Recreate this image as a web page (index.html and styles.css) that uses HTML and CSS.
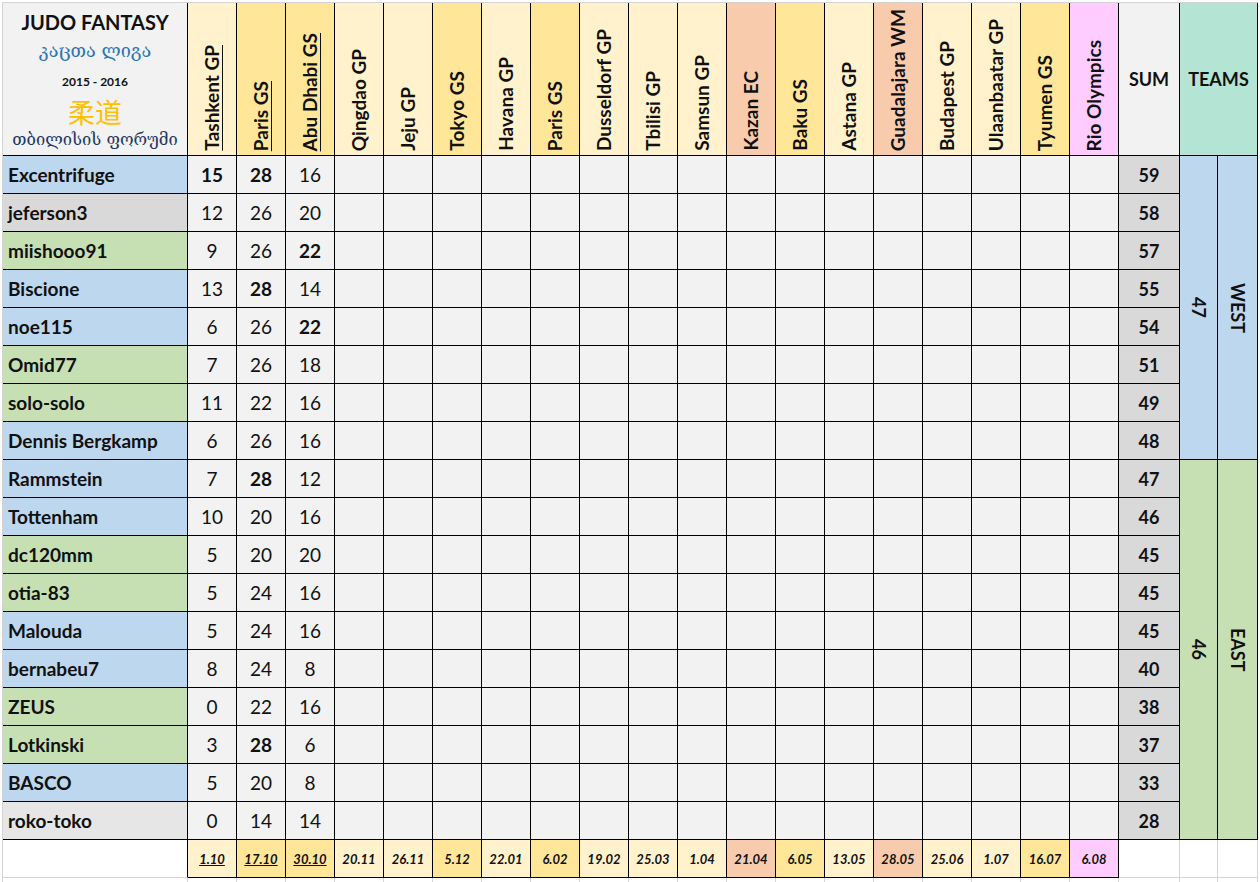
FILE: index.html
```html
<!DOCTYPE html>
<html lang="ka">
<head>
<meta charset="utf-8">
<title>Judo Fantasy 2015 - 2016</title>
<link rel="stylesheet" href="styles.css">
</head>
<body>
<div class="sheet">
  <!-- header row -->
  <div class="c title">
    <div class="t1">JUDO FANTASY</div>
    <div class="t2">კაცთა ლიგა</div>
    <div class="t3">2015 - 2016</div>
    <div class="t4">柔道</div>
    <div class="t5">თბილისის ფორუმი</div>
  </div>
  <div class="c ev lt"><span class="u">Tashkent GP</span></div>
  <div class="c ev st"><span class="u">Paris GS</span></div>
  <div class="c ev st"><span class="u">Abu Dhabi GS</span></div>
  <div class="c ev lt"><span>Qingdao GP</span></div>
  <div class="c ev lt"><span>Jeju GP</span></div>
  <div class="c ev st"><span>Tokyo GS</span></div>
  <div class="c ev lt"><span>Havana GP</span></div>
  <div class="c ev st"><span>Paris GS</span></div>
  <div class="c ev lt"><span>Dusseldorf GP</span></div>
  <div class="c ev lt"><span>Tbilisi GP</span></div>
  <div class="c ev lt"><span>Samsun GP</span></div>
  <div class="c ev or"><span>Kazan EC</span></div>
  <div class="c ev st"><span>Baku GS</span></div>
  <div class="c ev lt"><span>Astana GP</span></div>
  <div class="c ev or"><span>Guadalajara WM</span></div>
  <div class="c ev lt"><span>Budapest GP</span></div>
  <div class="c ev lt"><span>Ulaanbaatar GP</span></div>
  <div class="c ev st"><span>Tyumen GS</span></div>
  <div class="c ev pk"><span>Rio Olympics</span></div>
  <div class="c sumh">SUM</div>
  <div class="c teamsh">TEAMS</div>

  <!-- team blocks -->
  <div class="c tb west-n"><span>47</span></div>
  <div class="c tb west-l"><span>WEST</span></div>
  <div class="c tb east-n"><span>46</span></div>
  <div class="c tb east-l"><span>EAST</span></div>

  <!-- rows -->
  <div class="c n blue">Excentrifuge</div>
  <div class="c s b">15</div><div class="c s b">28</div><div class="c s">16</div>
  <div class="c s"></div><div class="c s"></div><div class="c s"></div><div class="c s"></div><div class="c s"></div><div class="c s"></div><div class="c s"></div><div class="c s"></div>
  <div class="c s"></div><div class="c s"></div><div class="c s"></div><div class="c s"></div><div class="c s"></div><div class="c s"></div><div class="c s"></div><div class="c s"></div>
  <div class="c sum">59</div>

  <div class="c n gray">jeferson3</div>
  <div class="c s">12</div><div class="c s">26</div><div class="c s">20</div>
  <div class="c s"></div><div class="c s"></div><div class="c s"></div><div class="c s"></div><div class="c s"></div><div class="c s"></div><div class="c s"></div><div class="c s"></div>
  <div class="c s"></div><div class="c s"></div><div class="c s"></div><div class="c s"></div><div class="c s"></div><div class="c s"></div><div class="c s"></div><div class="c s"></div>
  <div class="c sum">58</div>

  <div class="c n green">miishooo91</div>
  <div class="c s">9</div><div class="c s">26</div><div class="c s b">22</div>
  <div class="c s"></div><div class="c s"></div><div class="c s"></div><div class="c s"></div><div class="c s"></div><div class="c s"></div><div class="c s"></div><div class="c s"></div>
  <div class="c s"></div><div class="c s"></div><div class="c s"></div><div class="c s"></div><div class="c s"></div><div class="c s"></div><div class="c s"></div><div class="c s"></div>
  <div class="c sum">57</div>

  <div class="c n blue">Biscione</div>
  <div class="c s">13</div><div class="c s b">28</div><div class="c s">14</div>
  <div class="c s"></div><div class="c s"></div><div class="c s"></div><div class="c s"></div><div class="c s"></div><div class="c s"></div><div class="c s"></div><div class="c s"></div>
  <div class="c s"></div><div class="c s"></div><div class="c s"></div><div class="c s"></div><div class="c s"></div><div class="c s"></div><div class="c s"></div><div class="c s"></div>
  <div class="c sum">55</div>

  <div class="c n blue">noe115</div>
  <div class="c s">6</div><div class="c s">26</div><div class="c s b">22</div>
  <div class="c s"></div><div class="c s"></div><div class="c s"></div><div class="c s"></div><div class="c s"></div><div class="c s"></div><div class="c s"></div><div class="c s"></div>
  <div class="c s"></div><div class="c s"></div><div class="c s"></div><div class="c s"></div><div class="c s"></div><div class="c s"></div><div class="c s"></div><div class="c s"></div>
  <div class="c sum">54</div>

  <div class="c n green">Omid77</div>
  <div class="c s">7</div><div class="c s">26</div><div class="c s">18</div>
  <div class="c s"></div><div class="c s"></div><div class="c s"></div><div class="c s"></div><div class="c s"></div><div class="c s"></div><div class="c s"></div><div class="c s"></div>
  <div class="c s"></div><div class="c s"></div><div class="c s"></div><div class="c s"></div><div class="c s"></div><div class="c s"></div><div class="c s"></div><div class="c s"></div>
  <div class="c sum">51</div>

  <div class="c n green">solo-solo</div>
  <div class="c s">11</div><div class="c s">22</div><div class="c s">16</div>
  <div class="c s"></div><div class="c s"></div><div class="c s"></div><div class="c s"></div><div class="c s"></div><div class="c s"></div><div class="c s"></div><div class="c s"></div>
  <div class="c s"></div><div class="c s"></div><div class="c s"></div><div class="c s"></div><div class="c s"></div><div class="c s"></div><div class="c s"></div><div class="c s"></div>
  <div class="c sum">49</div>

  <div class="c n blue">Dennis Bergkamp</div>
  <div class="c s">6</div><div class="c s">26</div><div class="c s">16</div>
  <div class="c s"></div><div class="c s"></div><div class="c s"></div><div class="c s"></div><div class="c s"></div><div class="c s"></div><div class="c s"></div><div class="c s"></div>
  <div class="c s"></div><div class="c s"></div><div class="c s"></div><div class="c s"></div><div class="c s"></div><div class="c s"></div><div class="c s"></div><div class="c s"></div>
  <div class="c sum">48</div>

  <div class="c n blue">Rammstein</div>
  <div class="c s">7</div><div class="c s b">28</div><div class="c s">12</div>
  <div class="c s"></div><div class="c s"></div><div class="c s"></div><div class="c s"></div><div class="c s"></div><div class="c s"></div><div class="c s"></div><div class="c s"></div>
  <div class="c s"></div><div class="c s"></div><div class="c s"></div><div class="c s"></div><div class="c s"></div><div class="c s"></div><div class="c s"></div><div class="c s"></div>
  <div class="c sum">47</div>

  <div class="c n blue">Tottenham</div>
  <div class="c s">10</div><div class="c s">20</div><div class="c s">16</div>
  <div class="c s"></div><div class="c s"></div><div class="c s"></div><div class="c s"></div><div class="c s"></div><div class="c s"></div><div class="c s"></div><div class="c s"></div>
  <div class="c s"></div><div class="c s"></div><div class="c s"></div><div class="c s"></div><div class="c s"></div><div class="c s"></div><div class="c s"></div><div class="c s"></div>
  <div class="c sum">46</div>

  <div class="c n green">dc120mm</div>
  <div class="c s">5</div><div class="c s">20</div><div class="c s">20</div>
  <div class="c s"></div><div class="c s"></div><div class="c s"></div><div class="c s"></div><div class="c s"></div><div class="c s"></div><div class="c s"></div><div class="c s"></div>
  <div class="c s"></div><div class="c s"></div><div class="c s"></div><div class="c s"></div><div class="c s"></div><div class="c s"></div><div class="c s"></div><div class="c s"></div>
  <div class="c sum">45</div>

  <div class="c n green">otia-83</div>
  <div class="c s">5</div><div class="c s">24</div><div class="c s">16</div>
  <div class="c s"></div><div class="c s"></div><div class="c s"></div><div class="c s"></div><div class="c s"></div><div class="c s"></div><div class="c s"></div><div class="c s"></div>
  <div class="c s"></div><div class="c s"></div><div class="c s"></div><div class="c s"></div><div class="c s"></div><div class="c s"></div><div class="c s"></div><div class="c s"></div>
  <div class="c sum">45</div>

  <div class="c n blue">Malouda</div>
  <div class="c s">5</div><div class="c s">24</div><div class="c s">16</div>
  <div class="c s"></div><div class="c s"></div><div class="c s"></div><div class="c s"></div><div class="c s"></div><div class="c s"></div><div class="c s"></div><div class="c s"></div>
  <div class="c s"></div><div class="c s"></div><div class="c s"></div><div class="c s"></div><div class="c s"></div><div class="c s"></div><div class="c s"></div><div class="c s"></div>
  <div class="c sum">45</div>

  <div class="c n blue">bernabeu7</div>
  <div class="c s">8</div><div class="c s">24</div><div class="c s">8</div>
  <div class="c s"></div><div class="c s"></div><div class="c s"></div><div class="c s"></div><div class="c s"></div><div class="c s"></div><div class="c s"></div><div class="c s"></div>
  <div class="c s"></div><div class="c s"></div><div class="c s"></div><div class="c s"></div><div class="c s"></div><div class="c s"></div><div class="c s"></div><div class="c s"></div>
  <div class="c sum">40</div>

  <div class="c n green">ZEUS</div>
  <div class="c s">0</div><div class="c s">22</div><div class="c s">16</div>
  <div class="c s"></div><div class="c s"></div><div class="c s"></div><div class="c s"></div><div class="c s"></div><div class="c s"></div><div class="c s"></div><div class="c s"></div>
  <div class="c s"></div><div class="c s"></div><div class="c s"></div><div class="c s"></div><div class="c s"></div><div class="c s"></div><div class="c s"></div><div class="c s"></div>
  <div class="c sum">38</div>

  <div class="c n green">Lotkinski</div>
  <div class="c s">3</div><div class="c s b">28</div><div class="c s">6</div>
  <div class="c s"></div><div class="c s"></div><div class="c s"></div><div class="c s"></div><div class="c s"></div><div class="c s"></div><div class="c s"></div><div class="c s"></div>
  <div class="c s"></div><div class="c s"></div><div class="c s"></div><div class="c s"></div><div class="c s"></div><div class="c s"></div><div class="c s"></div><div class="c s"></div>
  <div class="c sum">37</div>

  <div class="c n blue">BASCO</div>
  <div class="c s">5</div><div class="c s">20</div><div class="c s">8</div>
  <div class="c s"></div><div class="c s"></div><div class="c s"></div><div class="c s"></div><div class="c s"></div><div class="c s"></div><div class="c s"></div><div class="c s"></div>
  <div class="c s"></div><div class="c s"></div><div class="c s"></div><div class="c s"></div><div class="c s"></div><div class="c s"></div><div class="c s"></div><div class="c s"></div>
  <div class="c sum">33</div>

  <div class="c n gray2">roko-toko</div>
  <div class="c s">0</div><div class="c s">14</div><div class="c s">14</div>
  <div class="c s"></div><div class="c s"></div><div class="c s"></div><div class="c s"></div><div class="c s"></div><div class="c s"></div><div class="c s"></div><div class="c s"></div>
  <div class="c s"></div><div class="c s"></div><div class="c s"></div><div class="c s"></div><div class="c s"></div><div class="c s"></div><div class="c s"></div><div class="c s"></div>
  <div class="c sum">28</div>

  <!-- dates row -->
  <div class="c dn"></div>
  <div class="c d lt u">1.10</div>
  <div class="c d st u">17.10</div>
  <div class="c d st u">30.10</div>
  <div class="c d lt">20.11</div>
  <div class="c d lt">26.11</div>
  <div class="c d st">5.12</div>
  <div class="c d lt">22.01</div>
  <div class="c d st">6.02</div>
  <div class="c d lt">19.02</div>
  <div class="c d lt">25.03</div>
  <div class="c d lt">1.04</div>
  <div class="c d or">21.04</div>
  <div class="c d st">6.05</div>
  <div class="c d lt">13.05</div>
  <div class="c d or">28.05</div>
  <div class="c d lt">25.06</div>
  <div class="c d lt">1.07</div>
  <div class="c d st">16.07</div>
  <div class="c d pk">6.08</div>
  <div class="c dx"></div><div class="c dx"></div><div class="c dx"></div>

  <!-- empty row -->
  <div class="c x"></div>
  <div class="c x"></div><div class="c x"></div><div class="c x"></div><div class="c x"></div><div class="c x"></div><div class="c x"></div><div class="c x"></div><div class="c x"></div><div class="c x"></div><div class="c x"></div>
  <div class="c x"></div><div class="c x"></div><div class="c x"></div><div class="c x"></div><div class="c x"></div><div class="c x"></div><div class="c x"></div><div class="c x"></div><div class="c x"></div>
  <div class="c x"></div><div class="c x"></div><div class="c x"></div>
</div>
</body>
</html>
```

FILE: styles.css
```css
html, body {
  margin: 0;
  padding: 0;
  background: #ffffff;
  overflow: hidden;
}

body {
  font-family: Lato, "Open Sans", sans-serif;
  color: #111111;
}

.sheet {
  margin: 2px 0 0 2px;
  border-top: 1px solid #d4d4d4;
  border-left: 1px solid #d4d4d4;
  display: grid;
  grid-template-columns: 185px repeat(19, 49px) 61px 38px 40px;
  grid-template-rows: 153px repeat(18, 38px) 38px 30px;
  width: max-content;
}

.c {
  box-sizing: border-box;
  border-right: 1px solid #000;
  border-bottom: 1px solid #000;
  display: flex;
  align-items: center;
  justify-content: center;
  overflow: hidden;
}

/* title cell */
.title {
  background: #f2f2f2;
  flex-direction: column;
  justify-content: flex-start;
  padding-top: 5px;
}
.t1 {
  font-weight: 700;
  font-size: 20px;
  line-height: 28px;
}
.t2 {
  font-family: "DejaVu Serif", "DejaVu Sans", serif;
  color: #2e75b6;
  font-size: 18px;
  line-height: 30px;
  white-space: nowrap;
}
.t3 {
  font-size: 12px;
  font-weight: 700;
  line-height: 30px;
  margin-top: 1px;
}
.t4 {
  font-family: "Noto Sans CJK SC", "Noto Sans CJK JP", sans-serif;
  color: #ffc000;
  font-size: 27px;
  line-height: 28px;
  margin-top: 1px;
}
.t5 {
  font-family: "DejaVu Serif", "DejaVu Sans", serif;
  color: #1f3864;
  font-size: 16.5px;
  line-height: 28px;
  white-space: nowrap;
}

/* event headers */
.ev {
  flex-direction: column;
  justify-content: flex-end;
  padding-bottom: 4px;
}
.ev span {
  writing-mode: vertical-rl;
  transform: rotate(180deg);
  font-weight: 700;
  font-size: 19px;
  white-space: nowrap;
  line-height: 20px;
}
.u, .ev .u {
  text-decoration: underline;
  text-decoration-thickness: 1px;
}

.lt { background: #fff2cc; }
.st { background: #ffe699; }
.or { background: #f8cbad; }
.pk { background: #ffccff; }

.sumh {
  background: #f2f2f2;
  font-weight: 700;
  font-size: 18px;
}
.teamsh {
  grid-column: span 2;
  background: #b4e5d4;
  font-weight: 700;
  font-size: 18px;
}

/* names */
.n {
  justify-content: flex-start;
  padding-left: 5px;
  font-weight: 700;
  font-size: 19px;
  white-space: nowrap;
}
.blue { background: #bdd7ee; }
.green { background: #c6e0b4; }
.gray { background: #d9d9d9; }
.gray2 { background: #e7e6e6; }

/* scores */
.s {
  background: #f2f2f2;
  font-size: 19px;
}
.s.b { font-weight: 700; }

.sum {
  background: #d9d9d9;
  font-weight: 700;
  font-size: 18px;
}

/* team blocks */
.tb {
  font-weight: 700;
  font-size: 18px;
}
.tb span {
  writing-mode: vertical-rl;
  white-space: nowrap;
}
.west-n { grid-column: 22; grid-row: 2 / span 8; background: #bdd7ee; }
.west-l { grid-column: 23; grid-row: 2 / span 8; background: #bdd7ee; }
.east-n { grid-column: 22; grid-row: 10 / span 10; background: #c6e0b4; }
.east-l { grid-column: 23; grid-row: 10 / span 10; background: #c6e0b4; }

/* dates */
.dn {
  border-bottom-color: #d4d4d4;
  background: #fff;
}
.d {
  font-size: 13px;
  font-weight: 700;
  font-style: italic;
}
.dx {
  border-right-color: #d4d4d4;
  border-bottom-color: #d4d4d4;
}
.x {
  border-right-color: #d4d4d4;
  border-bottom-color: #d4d4d4;
}
```
